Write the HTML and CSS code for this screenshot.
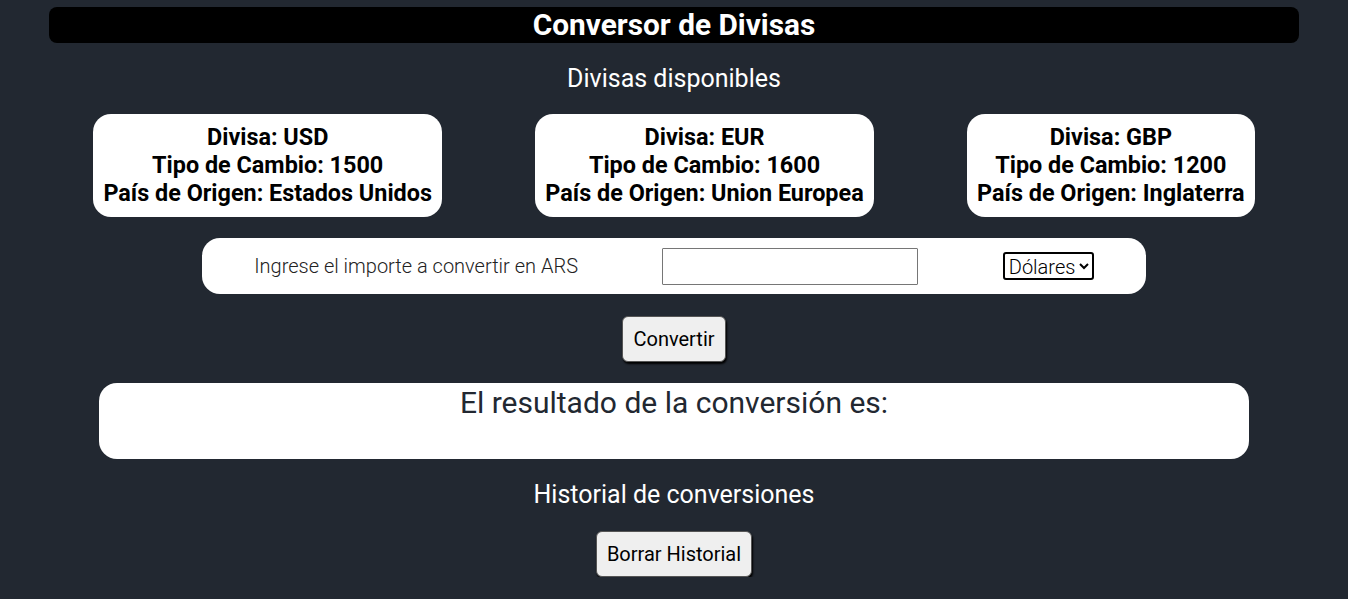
FILE: index.html
```html
<!DOCTYPE html>
<html lang="es">
<head>
<meta charset="utf-8">
<title>Conversor de Divisas</title>
<link rel="stylesheet" href="styles.css">
</head>
<body>
<header class="header"><h1 class="title">Conversor de Divisas</h1></header>
<h2 class="section-title">Divisas disponibles</h2>
<section class="cards">
  <div class="card">Divisa: USD<br>Tipo de Cambio: 1500<br>País de Origen: Estados Unidos</div>
  <div class="card">Divisa: EUR<br>Tipo de Cambio: 1600<br>País de Origen: Union Europea</div>
  <div class="card">Divisa: GBP<br>Tipo de Cambio: 1200<br>País de Origen: Inglaterra</div>
</section>
<form class="form-bar">
  <label class="form-label" for="importe">Ingrese el importe a convertir en ARS</label>
  <input class="form-input" id="importe" type="text">
  <select class="form-select"><option>Dólares</option><option>Euros</option><option>Libras</option></select>
</form>
<div class="btn-row"><button class="btn" type="button">Convertir</button></div>
<div class="result"><p class="result-text">El resultado de la conversión es:</p></div>
<h2 class="section-title">Historial de conversiones</h2>
<div class="btn-row btn-row-last"><button class="btn" type="button">Borrar Historial</button></div>
</body>
</html>
```
FILE: styles.css
```css
html, body {
  margin: 0;
  padding: 0;
  background: #222831;
  font-family: Roboto, "Liberation Sans", sans-serif;
}
body {
  padding-top: 7px;
}
.header {
  width: 1250px;
  margin: 0 auto;
  background: #000;
  border-radius: 8px;
  height: 36px;
  display: flex;
  align-items: center;
  justify-content: center;
}
.title {
  margin: 0;
  color: #fff;
  font-size: 29.8px;
  font-weight: 700;
  line-height: 36px;
}
.section-title {
  margin: 21px 0 0;
  color: #fff;
  font-size: 25px;
  font-weight: 400;
  text-align: center;
  line-height: 30px;
}
.cards {
  display: flex;
  justify-content: space-evenly;
  margin-top: 20px;
}
.card {
  background: #fff;
  border-radius: 18px;
  padding: 9px 10px 10px;
  text-align: center;
  font-weight: 700;
  font-size: 23.4px;
  line-height: 28px;
  color: #000;
}
.form-bar {
  width: 944px;
  box-sizing: border-box;
  height: 56px;
  margin: 21px auto 0;
  background: #fff;
  border-radius: 18px;
  padding: 0 10px;
  display: flex;
  align-items: center;
  justify-content: space-around;
}
.form-label {
  font-size: 20px;
  font-weight: 300;
  color: #222;
}
.form-input {
  width: 256px;
  height: 37px;
  box-sizing: border-box;
  border: 1px solid #767676;
  border-radius: 1px;
  margin: 0;
  font-size: 18px;
}
.form-select {
  font-family: Roboto, "Liberation Sans", sans-serif;
  font-size: 20px;
  font-weight: 300;
  color: #000;
  background: #fff;
  border: 2px solid #000;
  border-radius: 3px;
  height: 28px;
  padding: 0;
  margin: 0;
}
.btn-row {
  display: flex;
  justify-content: center;
  margin-top: 22px;
}
.btn-row-last {
  margin-top: 21px;
}
.btn {
  font-family: Roboto, "Liberation Sans", sans-serif;
  font-size: 20px;
  color: #000;
  background: #efefef;
  border: 1px solid #555;
  border-radius: 6px;
  box-shadow: 1px 2px 2px #000;
  height: 46px;
  padding: 0 10px;
}
.result {
  width: 1150px;
  height: 76px;
  margin: 21px auto 0;
  background: #fff;
  border-radius: 18px;
}
.result-text {
  margin: 0;
  padding-top: 3px;
  text-align: center;
  font-size: 30px;
  line-height: 34px;
  color: #222831;
}
```
